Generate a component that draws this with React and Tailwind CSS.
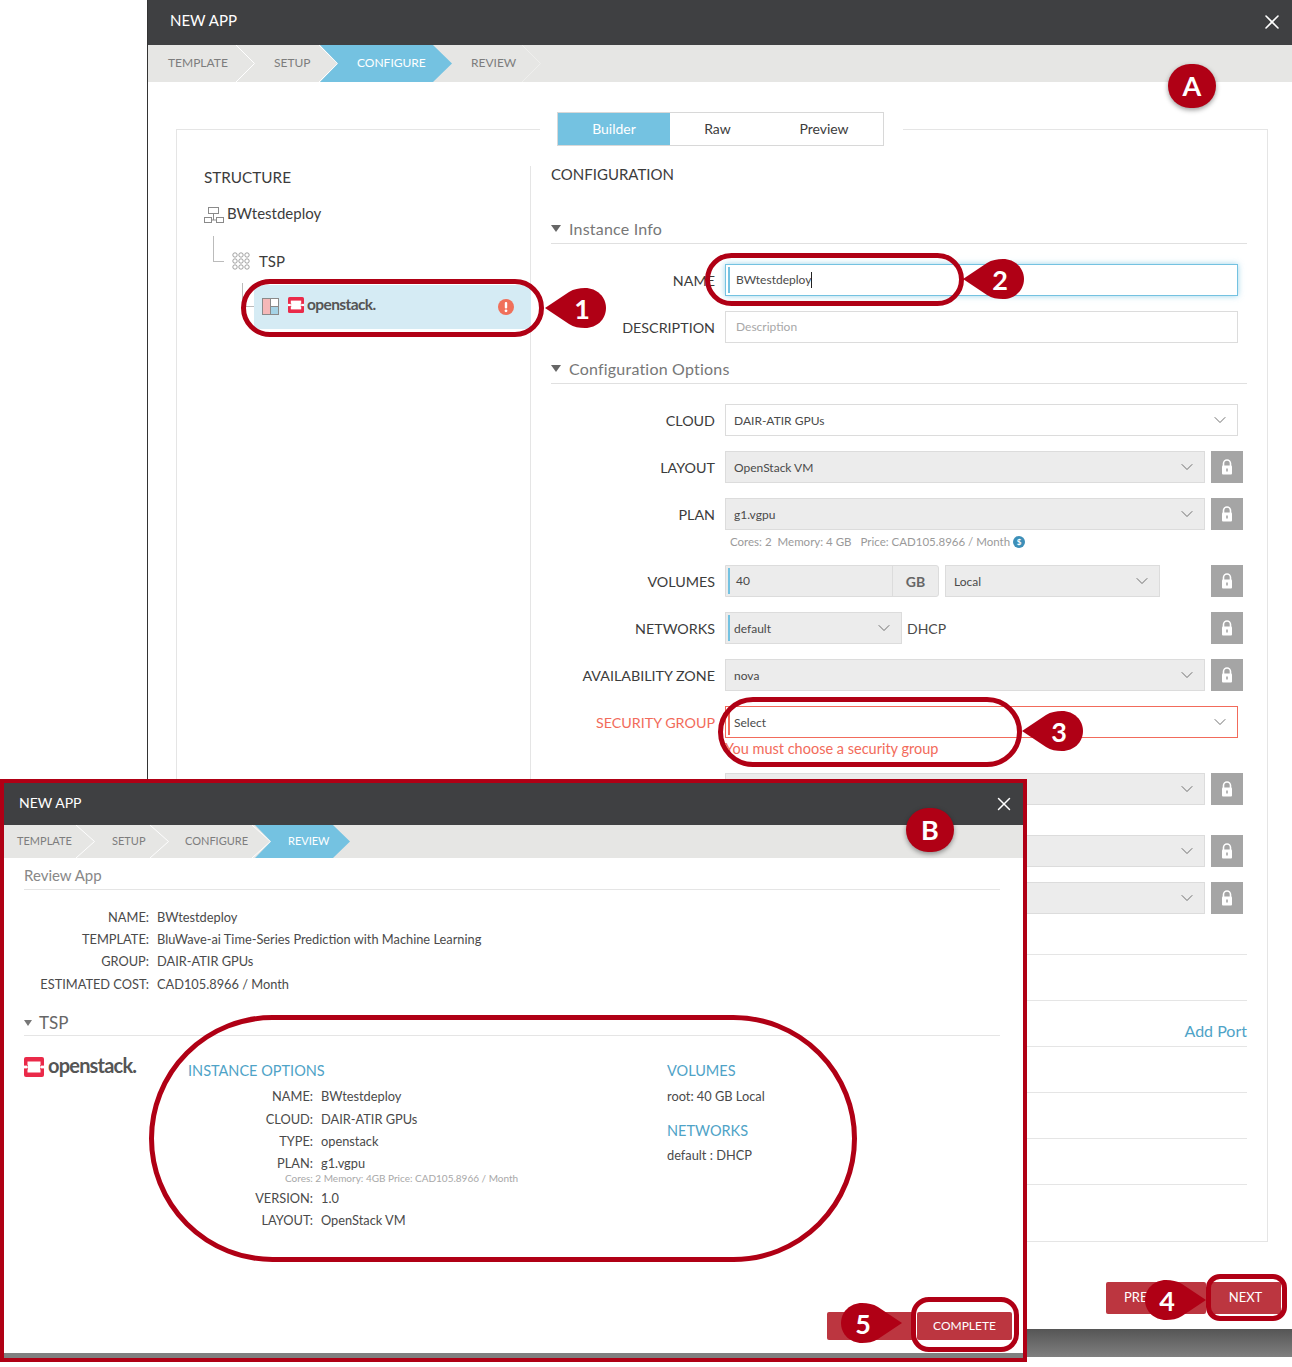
import { ChevronDown, X } from 'lucide-react';

const mainSteps = [
  { label: 'TEMPLATE', w: 'w-[107px]', pl: 'pl-[20px]' },
  { label: 'SETUP', w: 'w-[83px]', pl: 'pl-[19px]' },
  { label: 'CONFIGURE', w: 'w-[114px]', pl: 'pl-[19px]', active: '-left-[18px] [clip-path:polygon(0_0,calc(100%-19px)_0,100%_50%,calc(100%-19px)_100%,0_100%,18px_50%)]' },
  { label: 'REVIEW', w: 'w-[89px]', pl: 'pl-[19px]', faint: true },
];

const reviewSteps = [
  { label: 'TEMPLATE', w: 'w-[91px]', pl: 'pl-[13px]' },
  { label: 'SETUP', w: 'w-[74px]', pl: 'pl-[17px]' },
  { label: 'CONFIGURE', w: 'w-[102px]', pl: 'pl-[16px]' },
  { label: 'REVIEW', w: 'w-[79px]', pl: 'pl-[17px]', active: '-left-[16px] [clip-path:polygon(0_0,calc(100%-17px)_0,100%_50%,calc(100%-17px)_100%,0_100%,16px_50%)]' },
];

function Stepper({ steps, className, textPad = '' }) {
  return (
    <div className={`flex bg-[#e6e6e4] ${className}`}>
      {steps.map((s) => (
        <div key={s.label} className={`relative flex h-full items-center ${textPad} ${s.w} ${s.pl}`}>
          {s.active && <div className={`absolute right-0 top-0 h-full bg-[#74c2e1] ${s.active}`} />}
          {!s.active && (
            <svg className="absolute right-0 top-0 h-full w-[19px]" viewBox="0 0 19 37" preserveAspectRatio="none" fill="none" stroke={s.faint ? '#efefed' : '#fff'}>
              <path d="M0 0 L18.5 18.5 L0 37" />
            </svg>
          )}
          <span className={`relative ${s.active ? 'text-white' : 'text-[#7d7d7d]'}`}>{s.label}</span>
        </div>
      ))}
    </div>
  );
}

function LockBox() {
  return (
    <div className="flex h-8 w-8 items-center justify-center bg-[#a5a5a5]">
      <svg width="12" height="16" viewBox="0 0 12 16">
        <path d="M2.5 7V4.5a3.5 3.5 0 0 1 7 0V7" fill="none" stroke="#fff" strokeWidth="1.6" />
        <rect x="1" y="6.5" width="10" height="9" rx="1" fill="#fff" />
        <rect x="5.2" y="9.5" width="1.6" height="3" fill="#a5a5a5" />
      </svg>
    </div>
  );
}

function Select({ value, disabled, bar, className = 'flex-1' }) {
  return (
    <div className={`relative flex h-8 shrink-0 items-center border border-[#dcdcdc] pl-[8px] pr-[7px] text-[12px] text-[#4a4a4a] ${disabled ? 'bg-[#ececec]' : 'bg-white'} ${className}`}>
      {bar && <span className="absolute bottom-[2px] left-[2px] top-[2px] w-[2px] bg-[#74c2e1]" />}
      <span className="flex-1 pt-[1px]">{value}</span>
      <ChevronDown size={20} strokeWidth={1} className="text-[#555]" />
    </div>
  );
}

function Row({ label, className = 'mt-[15px]', labelClass = 'text-[#3c3c3c]', children }) {
  return (
    <div className={`flex items-center ${className}`}>
      <div className={`mr-[10px] w-[164px] shrink-0 pt-[1px] text-right text-[14.3px] ${labelClass}`}>{label}</div>
      {children}
    </div>
  );
}

function LockedRow({ label, value, className }) {
  return (
    <Row label={label} className={className}>
      <Select value={value} disabled className="w-[480px]" />
      <div className="ml-[6px]"><LockBox /></div>
    </Row>
  );
}

function OpenstackMark({ className }) {
  return (
    <svg className={className} viewBox="0 0 20 20">
      <rect width="20" height="20" rx="2" fill="#ea2a49" />
      <rect x="3.5" y="4.5" width="13" height="11" fill="#fff" />
      <rect x="0" y="8" width="4" height="1.4" fill="#ea2a49" />
      <rect x="0" y="11" width="4" height="1.4" fill="#ea2a49" />
      <rect x="16" y="8" width="4" height="1.4" fill="#ea2a49" />
      <rect x="16" y="11" width="4" height="1.4" fill="#ea2a49" />
      <rect x="0" y="8.6" width="3.5" height="2.8" fill="#fff" />
      <rect x="16.5" y="8.6" width="3.5" height="2.8" fill="#fff" />
    </svg>
  );
}

// red teardrop callouts from the annotated screenshot
function Callout({ n, className, flip }) {
  return (
    <div className={`absolute flex h-10 w-[61px] items-center justify-center ${className}`}>
      <svg className={`absolute inset-0 ${flip ? '-scale-x-100' : ''}`} viewBox="0 0 61 40">
        <path d="M0 20 L24 4 C29 1 34 0 40 0 C52 0 61 9 61 20 C61 31 52 40 40 40 C34 40 29 39 24 36 Z" fill="#b00015" />
      </svg>
      <span className={`relative text-[27px] font-bold leading-none text-white ${flip ? 'pr-[17px]' : 'pl-[13px]'}`}>{n}</span>
    </div>
  );
}

function Badge({ n, className }) {
  return (
    <div className={`absolute flex h-[44px] w-[48px] items-center justify-center rounded-full bg-[#b00015] text-[27px] font-bold text-white shadow-[0_2px_5px_rgba(0,0,0,0.4)] ${className}`}>
      {n}
    </div>
  );
}

function Ring({ className }) {
  return <div className={`absolute border-[5px] border-[#b00015] ${className}`} />;
}

function InfoRow({ label, value }) {
  return (
    <div className="flex h-[22.4px] items-center">
      <div className="w-[133px] pr-[8px] text-right">{label}</div>
      <div>{value}</div>
    </div>
  );
}

function SectionTitle({ children, className }) {
  return (
    <div className={`flex h-[32px] items-center border-b border-[#e0e0e0] pt-[2px] text-[16px] tracking-[0.2px] text-[#777] ${className}`}>
      <span className="mr-[8px] h-0 w-0 border-x-[5px] border-t-[7px] border-x-transparent border-t-[#666]" />
      {children}
    </div>
  );
}

function MainWindow() {
  return (
    <div className="absolute left-[147px] top-0 h-[1357px] w-[1145px] border-l border-[#333] bg-white">
      <div className="flex h-[45px] items-center justify-between bg-[#3f4042] pb-[4px] pl-[22px] pr-[8px] text-[15px] text-white">
        <span>NEW APP</span>
        <X size={24} strokeWidth={1.6} className="mt-[2px]" />
      </div>
      <Stepper steps={mainSteps} className="h-[37px] text-[12px]" textPad="pb-[2px]" />

      <div className="relative ml-[28px] mt-[47px] flex h-[1113px] w-[1092px] border border-[#e5e5e5] pt-[36px]">
        <div className="absolute -top-[18px] left-[363px] flex h-[34px] bg-white pl-[17px] pr-[19px] text-[14px] text-[#3c3c3c]">
          <div className="flex h-full w-[327px] border border-[#d8d8d8] pb-[2px]">
            <div className="-mb-[2px] flex w-[112px] items-center justify-center bg-[#74c2e1] pb-[2px] text-white">Builder</div>
            <div className="flex w-[95px] items-center justify-center">Raw</div>
            <div className="flex w-[118px] items-center justify-center">Preview</div>
          </div>
        </div>

        <div className="h-full w-[354px] border-r border-[#e5e5e5] pl-[27px] text-[#3c3c3c]">
          <div className="text-[15.3px]">STRUCTURE</div>
          <div className="mt-[14px] flex h-[20px] items-center text-[15px]">
            <svg width="20" height="18" viewBox="0 0 20 18" fill="none" stroke="#8a8a8a" className="mr-[3px] mt-[4px]">
              <rect x="4.5" y="1.5" width="10" height="6" />
              <rect x="0.5" y="11.5" width="7" height="5" />
              <rect x="12.5" y="11.5" width="7" height="5" />
              <path d="M9.5 7.5v6.5M7.5 14h5" />
            </svg>
            BWtestdeploy
          </div>
          <div className="relative mt-[22px] flex h-[32px] items-center pl-[28px] text-[15px]">
            <div className="absolute -top-[9px] left-[9px] h-[26px] w-[11px] border-b border-l border-[#bbb]" />
            <svg width="18" height="18" viewBox="0 0 18 18" fill="none" stroke="#8a8a8a" strokeWidth="0.8" className="mr-[9px]">
              {[3, 9, 15].map((y) => [3, 9, 15].map((x) => <circle key={`${x}-${y}`} cx={x} cy={y} r="2.2" />))}
            </svg>
            TSP
          </div>
          <div className="relative ml-[50px] mt-[8px] flex h-[44px] w-[277px] items-center bg-[#d5ebf4] pl-[8px] pr-[17px]">
            <div className="absolute -left-[12px] -top-[2px] h-[24px] w-[12px] border-b border-l border-[#bbb]" />
            <svg width="17" height="17" viewBox="0 0 17 17" className="mr-[9px]">
              <rect x="0.5" y="0.5" width="8" height="16" fill="#f5b8b8" stroke="#8a8a8a" />
              <rect x="8.5" y="0.5" width="8" height="8" fill="#fff" stroke="#8a8a8a" />
              <rect x="8.5" y="8.5" width="8" height="8" fill="#a5d3e6" stroke="#8a8a8a" />
            </svg>
            <OpenstackMark className="mb-[3px] h-[16px] w-[16px]" />
            <span className="mb-[5px] ml-[3px] flex-1 text-[15.5px] font-bold tracking-[-0.6px] text-[#555]">openstack.</span>
            <svg width="16" height="16" viewBox="0 0 16 16">
              <circle cx="8" cy="8" r="8" fill="#f0705a" />
              <rect x="6.8" y="3" width="2.4" height="6.5" rx="1" fill="#fff" />
              <circle cx="8" cy="11.8" r="1.4" fill="#fff" />
            </svg>
          </div>
        </div>

        <div className="w-[737px] pl-[20px] pr-[20px]">
          <div className="h-[17px] text-[15px] leading-[17px] text-[#3c3c3c]">CONFIGURATION</div>
          <SectionTitle className="mt-[29px]">Instance Info</SectionTitle>

          <Row label="NAME" className="mt-[20px]">
            <div className="relative flex h-8 w-[513px] items-center border border-[#74c2e1] bg-white pl-[10px] text-[12px] text-[#4a4a4a] shadow-[0_0_6px_rgba(116,194,225,0.7)]">
              <span className="absolute bottom-[2px] left-[2px] top-[2px] w-[2px] bg-[#74c2e1]" />
              BWtestdeploy
              <span className="h-[16px] w-px bg-[#222]" />
            </div>
          </Row>
          <Row label="DESCRIPTION">
            <div className="flex h-8 w-[513px] items-center border border-[#dcdcdc] pl-[10px] text-[12px] text-[#a8a8a8]">Description</div>
          </Row>

          <SectionTitle className="mt-[9px]">Configuration Options</SectionTitle>

          <Row label="CLOUD" className="mt-[20px]">
            <Select value="DAIR-ATIR GPUs" className="w-[513px]" />
          </Row>
          <LockedRow label="LAYOUT" value="OpenStack VM" />
          <LockedRow label="PLAN" value="g1.vgpu" />
          <div className="ml-[179px] flex h-[23px] items-center text-[11.5px] text-[#9a9a9a]">
            <span className="mr-[6px]">Cores: 2</span>
            <span className="mr-[9px]">Memory: 4 GB</span>
            <span>Price: CAD105.8966 / Month</span>
            <span className="ml-[3px] flex h-[12px] w-[12px] items-center justify-center rounded-full bg-[#3d8fb8] text-[8px] font-bold text-white">$</span>
          </div>
          <Row label="VOLUMES" className="mt-[12px]">
            <div className="relative flex h-8 w-[214px] shrink-0 items-center rounded-r-[3px] border border-[#dcdcdc] bg-[#ececec] text-[12px] text-[#4a4a4a]">
              <span className="absolute bottom-[2px] left-[2px] top-[2px] w-[2px] bg-[#74c2e1]" />
              <span className="flex-1 pl-[10px]">40</span>
              <span className="flex h-full w-[46px] items-center justify-center border-l border-[#dcdcdc] text-[14px] font-bold text-[#666]">GB</span>
            </div>
            <Select value="Local" disabled className="ml-[6px] w-[215px]" />
            <div className="ml-[51px]"><LockBox /></div>
          </Row>
          <Row label="NETWORKS">
            <Select value="default" disabled bar className="w-[177px]" />
            <span className="ml-[5px] w-[303px] text-[14px] text-[#4a4a4a]">DHCP</span>
            <div className="ml-[1px]"><LockBox /></div>
          </Row>
          <LockedRow label="AVAILABILITY ZONE" value="nova" />
          <Row label="SECURITY GROUP" labelClass="text-[#f26b5b]">
            <div className="relative flex h-8 w-[513px] items-center border border-[#f26b5b] bg-white pl-[8px] pr-[7px] text-[12px] text-[#4a4a4a]">
              <span className="absolute bottom-[2px] left-[2px] top-[2px] w-[2px] bg-[#f26b5b]" />
              <span className="flex-1 pt-[1px]">Select</span>
              <ChevronDown size={20} strokeWidth={1} className="text-[#555]" />
            </div>
          </Row>
          <div className="ml-[174px] flex h-[22px] items-center text-[14.5px] text-[#f26b5b]">You must choose a security group</div>
          <LockedRow label="" value="" className="mt-[13px]" />
          <LockedRow label="" value="" className="mt-[30px]" />
          <LockedRow label="" value="" />
          <div className="mt-[40px] border-t border-[#e5e5e5]" />
          <div className="mt-[45px] border-t border-[#e5e5e5]" />
          <div className="flex h-[46px] items-center justify-end border-b border-[#e5e5e5] pt-[15px] text-[16px] text-[#4fa3c7]">Add Port</div>
          <div className="h-[46px] border-b border-[#e5e5e5]" />
          <div className="h-[46px] border-b border-[#e5e5e5]" />
          <div className="h-[46px] border-b border-[#e5e5e5]" />
        </div>
      </div>

      <div className="mr-[11px] mt-[40px] flex justify-end gap-[4px] text-[13px] text-white">
        <div className="flex h-8 w-[100px] items-center rounded-[2px] bg-[#bc3640] pl-[18px]">PREV</div>
        <div className="flex h-8 w-[71px] items-center justify-center rounded-[2px] bg-[#bc3640]">NEXT</div>
      </div>
      <div className="absolute bottom-0 left-0 right-0 h-[28px] bg-gradient-to-b from-[#555] to-[#808080]" />
    </div>
  );
}

function ReviewWindow() {
  return (
    <div className="absolute left-0 top-[779px] flex h-[583px] w-[1027px] flex-col border-4 border-[#b00015] bg-white text-[12.8px] text-[#4a4a4a]">
      <div className="flex h-[42px] shrink-0 items-center justify-between bg-[#3f4042] pb-[4px] pl-[15px] pr-[8px] text-[14px] text-white">
        <span>NEW APP</span>
        <X size={22} strokeWidth={1.6} className="mt-[3px]" />
      </div>
      <Stepper steps={reviewSteps} className="h-[33px] shrink-0 text-[11px]" />
      <div className="relative flex-1 pl-[20px] pr-[23px]">
        <div className="flex h-[32px] items-center border-b border-[#e5e5e5] pt-[4px] text-[15px] text-[#888]">Review App</div>
        <div className="mt-[16px]">
          <InfoRow label="NAME:" value="BWtestdeploy" />
          <InfoRow label="TEMPLATE:" value="BluWave-ai Time-Series Prediction with Machine Learning" />
          <InfoRow label="GROUP:" value="DAIR-ATIR GPUs" />
          <InfoRow label="ESTIMATED COST:" value="CAD105.8966 / Month" />
        </div>
        <div className="mt-[10px] flex h-[30px] items-center border-b border-[#e5e5e5] pt-[5px] text-[17px] text-[#666]">
          <span className="mr-[7px] h-0 w-0 border-x-[4.5px] border-t-[6px] border-x-transparent border-t-[#777]" />
          TSP
        </div>
        <div className="flex">
          <div className="flex w-[164px] shrink-0 items-start pt-[21px]">
            <OpenstackMark className="h-[20px] w-[20px]" />
            <span className="-mt-[7px] ml-[4px] text-[20px] font-bold tracking-[-0.8px] text-[#555]">openstack.</span>
          </div>
          <div className="w-[479px] shrink-0 pt-[25px]">
            <div className="text-[14.5px] leading-[20px] text-[#4fa3c7]">INSTANCE OPTIONS</div>
            <div className="mt-[5px]">
              <InfoRow label="NAME:" value="BWtestdeploy" />
              <InfoRow label="CLOUD:" value="DAIR-ATIR GPUs" />
              <InfoRow label="TYPE:" value="openstack" />
              <InfoRow label="PLAN:" value="g1.vgpu" />
            </div>
            <div className="-mt-[4px] ml-[97px] h-[15px] text-[10px] leading-[15px] text-[#a8a8a8]">Cores: 2 Memory: 4GB Price: CAD105.8966 / Month</div>
            <div className="mt-[1px]">
              <InfoRow label="VERSION:" value="1.0" />
              <InfoRow label="LAYOUT:" value="OpenStack VM" />
            </div>
          </div>
          <div className="pt-[25px]">
            <div className="text-[14.5px] leading-[20px] text-[#4fa3c7]">VOLUMES</div>
            <div className="mt-[5px] flex h-[22px] items-center">root: 40 GB Local</div>
            <div className="mt-[13px] text-[14.5px] leading-[20px] text-[#4fa3c7]">NETWORKS</div>
            <div className="mt-[4px] flex h-[22px] items-center">default : DHCP</div>
          </div>
        </div>
        <div className="absolute bottom-[13px] right-[11px] flex gap-[3px] text-[12px] text-white">
          <div className="h-7 w-[87px] rounded-[2px] bg-[#bc3640]" />
          <div className="flex h-7 w-[95px] items-center justify-center rounded-[2px] bg-[#bc3640]">COMPLETE</div>
        </div>
      </div>
      <div className="h-[5px] shrink-0 bg-[#808080]" />
    </div>
  );
}

export default function App() {
  return (
    <div className="relative h-[1367px] w-[1292px] overflow-hidden bg-white font-['Lato',sans-serif]">
      <MainWindow />
      <ReviewWindow />

      {/* annotations */}
      <Ring className="left-[241px] top-[279px] h-[58px] w-[303px] rounded-full" />
      <Ring className="left-[705px] top-[253px] h-[53px] w-[259px] rounded-full" />
      <Ring className="left-[718px] top-[697px] h-[70px] w-[304px] rounded-full" />
      <Ring className="left-[149px] top-[1015px] h-[247px] w-[708px] rounded-[124px]" />
      <Ring className="left-[1206px] top-[1274px] h-[47px] w-[81px] rounded-[14px]" />
      <Ring className="left-[911px] top-[1297px] h-[55px] w-[108px] rounded-[18px]" />
      <Callout n="1" className="left-[545px] top-[288px]" />
      <Callout n="2" className="left-[963px] top-[259px]" />
      <Callout n="3" className="left-[1022px] top-[711px]" />
      <Callout n="4" flip className="left-[1145px] top-[1280px]" />
      <Callout n="5" flip className="left-[841px] top-[1303px]" />
      <Badge n="A" className="left-[1168px] top-[64px]" />
      <Badge n="B" className="left-[906px] top-[808px]" />
    </div>
  );
}
